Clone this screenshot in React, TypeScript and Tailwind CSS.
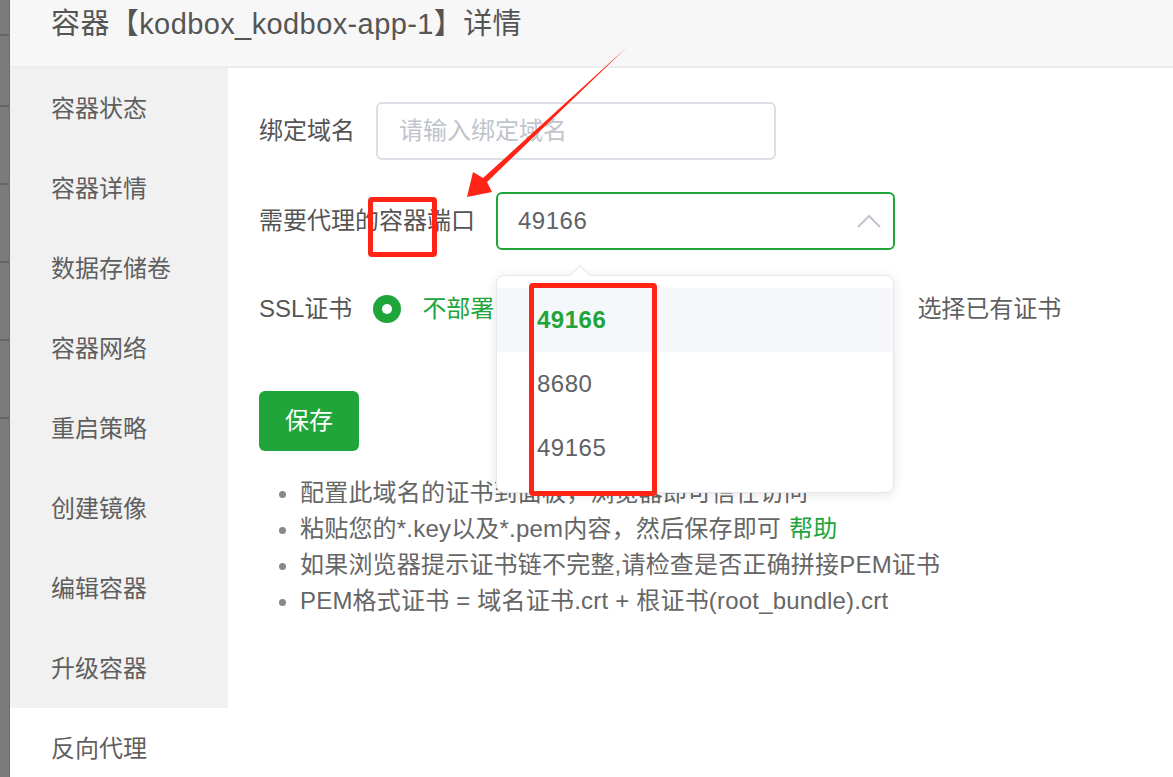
import { useState } from "react";

const MENU = [
  "容器状态",
  "容器详情",
  "数据存储卷",
  "容器网络",
  "重启策略",
  "创建镜像",
  "编辑容器",
  "升级容器",
  "反向代理",
];

const PORTS = ["49166", "8680", "49165"];

const TIPS = [
  "配置此域名的证书到面板，浏览器即可信任访问",
  "粘贴您的*.key以及*.pem内容，然后保存即可",
  "如果浏览器提示证书链不完整,请检查是否正确拼接PEM证书",
  "PEM格式证书 = 域名证书.crt + 根证书(root_bundle).crt",
];

function Radio({ checked }: { checked?: boolean }) {
  return checked ? (
    <span className="flex h-[28px] w-[28px] shrink-0 items-center justify-center rounded-full bg-[#20a53a]">
      <span className="h-[10px] w-[10px] rounded-full bg-white" />
    </span>
  ) : (
    <span className="block h-[28px] w-[28px] shrink-0 rounded-full border-2 border-[#dcdfe6] bg-white" />
  );
}

export default function App() {
  const [port] = useState("49166");

  return (
    <div className="relative flex h-[777px] w-[1173px] overflow-hidden bg-white font-['Liberation_Sans','Noto_Sans_CJK_SC',sans-serif] text-[24px] text-[#5f5f5f]">
      {/* backdrop strip of the page behind the dialog */}
      <div className="flex w-[10px] shrink-0 flex-col border-r border-[#6c6c6c] bg-[#7b7b7b]">
        <div className="h-[34px]" />
        <div className="h-[2px] bg-[#656565]" />
        <div className="h-[69px]" />
        <div className="h-[2px] bg-[#656565]" />
        <div className="h-[76px]" />
        <div className="h-[2px] bg-[#656565]" />
        <div className="h-[76px]" />
        <div className="h-[2px] bg-[#656565]" />
        <div className="h-[76px]" />
        <div className="h-[2px] bg-[#656565]" />
        <div className="h-[76px]" />
        <div className="h-[2px] bg-[#656565]" />
      </div>

      <div className="flex min-w-0 flex-1 flex-col">
        <header className="h-[68px] shrink-0 border-b-2 border-[#ececec] bg-[#f7f7f7] pl-[41px] pt-[4px]">
          <h1 className="text-[29px] leading-[40px] tracking-[0.4px] text-[#555]">容器【kodbox_kodbox-app-1】详情</h1>
        </header>

        <div className="flex flex-1">
          <aside className="flex w-[218px] shrink-0 flex-col">
            {MENU.map((item, i) => (
              <div
                key={item}
                className={`flex h-[80px] shrink-0 items-center pl-[41px] pt-[1px] ${
                  i === MENU.length - 1 ? "bg-white" : "bg-[#f1f1f1]"
                }`}
              >
                {item}
              </div>
            ))}
          </aside>

          <main className="flex-1 pl-[31px] pt-[34px]">
            <div className="flex h-[58px] items-center gap-[21px]">
              <span className="text-[#555]">绑定域名</span>
              <div className="flex h-[58px] w-[400px] items-center rounded-[6px] border-2 border-[#dcdfe6] pl-[21px] text-[#c0c4cc]">
                请输入绑定域名
              </div>
            </div>

            <div className="mt-[32px] flex h-[58px] items-center gap-[21px]">
              <span className="text-[#555]">需要代理的容器端口</span>
              <div className="relative">
                <div className="flex h-[58px] w-[399px] items-center justify-between rounded-[6px] border-2 border-[#20a53a] pl-[20px] pr-[12px] text-[#606266]">
                  <span className="tracking-[0.5px]">{port}</span>
                  <svg width="24" height="14" viewBox="0 0 24 14" fill="none">
                    <path d="M1 13 L12 2 L23 13" stroke="#c0c4cc" strokeWidth="2" />
                  </svg>
                </div>

                <div className="absolute left-0 top-[83px] z-20 w-[398px] rounded-[8px] border border-[#e4e7ed] bg-white py-[12px] shadow-[0_2px_12px_rgba(0,0,0,0.1)]">
                  <div className="absolute left-[76px] top-[-8px] h-[14px] w-[14px] rotate-45 border-l border-t border-[#e4e7ed] bg-white" />
                  {PORTS.map((p) => (
                    <div
                      key={p}
                      className={`flex h-[64px] items-center pl-[40px] tracking-[0.5px] ${
                        p === port ? "bg-[#f5f7fa] font-semibold text-[#20a53a]" : "text-[#606266]"
                      }`}
                    >
                      {p}
                    </div>
                  ))}
                </div>
              </div>
            </div>

            <div className="mt-[30px] flex h-[58px] items-center">
              <span className="mr-[21px] text-[#555]">SSL证书</span>
              <Radio checked />
              <span className="ml-[21px] text-[#20a53a]">不部署</span>
              {/* options hidden behind the open dropdown */}
              <span className="invisible ml-[75px] flex items-center">
                <Radio />
                <span className="ml-[21px]">使用自定义证书</span>
              </span>
              <span className="invisible ml-[73px] flex">
                <Radio />
              </span>
              <span className="ml-[30px]">选择已有证书</span>
            </div>

            <button className="mt-[53px] flex h-[60px] w-[100px] items-center justify-center rounded-[6px] bg-[#20a53a] text-white">
              保存
            </button>

            <ul className="mt-[24px] list-disc pl-[41px] leading-[36px] text-[#666] marker:text-[#888]">
              {TIPS.map((t, i) => (
                <li key={t} className="tracking-[0.2px]">
                  {t}
                  {i === 1 && <span className="ml-[8px] text-[#20a53a]">帮助</span>}
                </li>
              ))}
            </ul>
          </main>
        </div>
      </div>

      {/* red annotations */}
      <div className="pointer-events-none absolute left-[368px] top-[197px] z-30 h-[60px] w-[69px] rounded-[4px] border-[5px] border-[#ff2416]" />
      <div className="pointer-events-none absolute left-[529px] top-[283px] z-30 h-[213px] w-[128px] rounded-[4px] border-[5px] border-[#ff2416]" />
      <svg className="pointer-events-none absolute left-0 top-0 z-30" width="1173" height="777">
        <polygon
          points="467,197 473,172 483,178 627,47 487,182 492,192"
          fill="#ff2416"
        />
      </svg>
    </div>
  );
}
